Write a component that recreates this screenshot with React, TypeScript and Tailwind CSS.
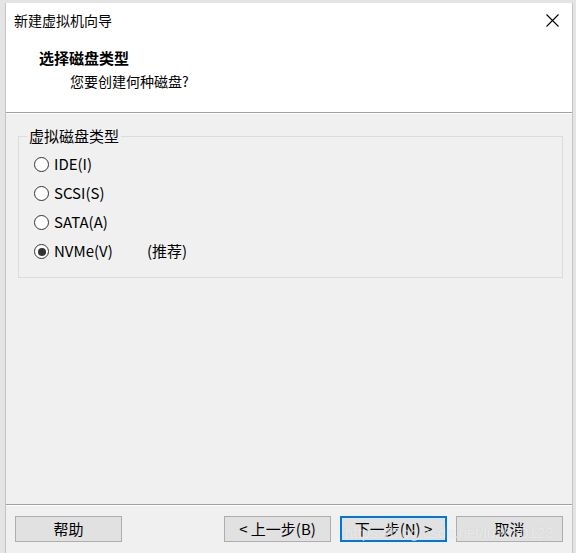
const CJK = '"Microsoft YaHei", "Noto Sans CJK SC", sans-serif'

const DISK_TYPES = [
  { label: 'IDE(I)', checked: false },
  { label: 'SCSI(S)', checked: false },
  { label: 'SATA(A)', checked: false },
  { label: 'NVMe(V)', checked: true, note: '(推荐)' },
]

function Radio({ label, checked, note }: { label: string; checked: boolean; note?: string }) {
  return (
    <div className="h-[29px] flex items-center pl-[15px]">
      <span className="w-[15px] h-[15px] rounded-full border border-[#333] bg-white flex items-center justify-center">
        {checked && <span className="w-[8px] h-[8px] rounded-full bg-[#333]" />}
      </span>
      <span className="ml-[5px] w-[93px] text-[15px] text-black">{label}</span>
      {note && <span className="text-[15px] text-black">{note}</span>}
    </div>
  )
}

function Button({ children, focused }: { children: React.ReactNode; focused?: boolean }) {
  return (
    <div
      className={`h-[26px] w-[107px] flex items-center justify-center bg-[#e1e1e1] text-[15px] text-black ${
        focused ? 'border-2 border-[#0078d7]' : 'border border-[#adadad]'
      }`}
    >
      {children}
    </div>
  )
}

export default function App() {
  return (
    <div className="w-[576px] h-[553px] bg-[#e4e4e4] pt-[3px] pl-[5px] overflow-hidden relative" style={{ fontFamily: CJK }}>
      <div className="w-[568px] h-[550px] flex flex-col border-l border-r border-[#c4c4c4] bg-[#f0f0f0]">
        {/* header */}
        <div className="bg-white h-[110px] border-b border-[#a0a0a0] shrink-0">
          <div className="h-[34px] flex items-center justify-between pl-[8px] pr-[13px]">
            <span className="text-[14px] text-black">新建虚拟机向导</span>
            <svg width="13" height="13" viewBox="0 0 13 13" className="text-black">
              <path d="M0.5 0.5 L12.5 12.5 M12.5 0.5 L0.5 12.5" stroke="currentColor" strokeWidth="1.1" />
            </svg>
          </div>
          <div className="mt-[10px] h-[22px] flex items-center pl-[33px] text-[15px] font-bold text-black">选择磁盘类型</div>
          <div className="mt-[1px] h-[22px] flex items-center pl-[64px] text-[14px] text-black">您要创建何种磁盘?</div>
        </div>

        {/* body */}
        <div className="flex-1 border-t border-white">
          <fieldset className="ml-[12px] mt-[12px] w-[545px] border border-[#dcdcdc] pb-[11px]">
            <legend className="ml-[8px] px-[2px] h-[20px] leading-[20px] text-[15px] text-black">虚拟磁盘类型</legend>
            <div className="pt-[4px]">
              {DISK_TYPES.map((d) => (
                <Radio key={d.label} {...d} />
              ))}
            </div>
          </fieldset>
        </div>

        {/* footer */}
        <div className="border-t border-[#a0a0a0] shrink-0">
          <div className="border-t border-white h-[48px] pt-[10px] flex items-start pl-[9px] pr-[9px]">
            <Button>帮助</Button>
            <div className="flex-1" />
            <div className="flex gap-[9px]">
              <Button>&lt; 上一步(B)</Button>
              <Button focused>下一步(N) &gt;</Button>
              <Button>取消</Button>
            </div>
          </div>
        </div>
      </div>

      {/* watermark */}
      <div
        className="absolute left-[345px] top-[522px] text-[15px] text-white/60 whitespace-nowrap pointer-events-none"
        style={{ fontFamily: '"Liberation Sans", Arial, sans-serif', textShadow: '0 0 1px rgba(140,140,140,0.3)' }}
      >
        https://blog.csdn.net/lu2830123
      </div>
    </div>
  )
}
